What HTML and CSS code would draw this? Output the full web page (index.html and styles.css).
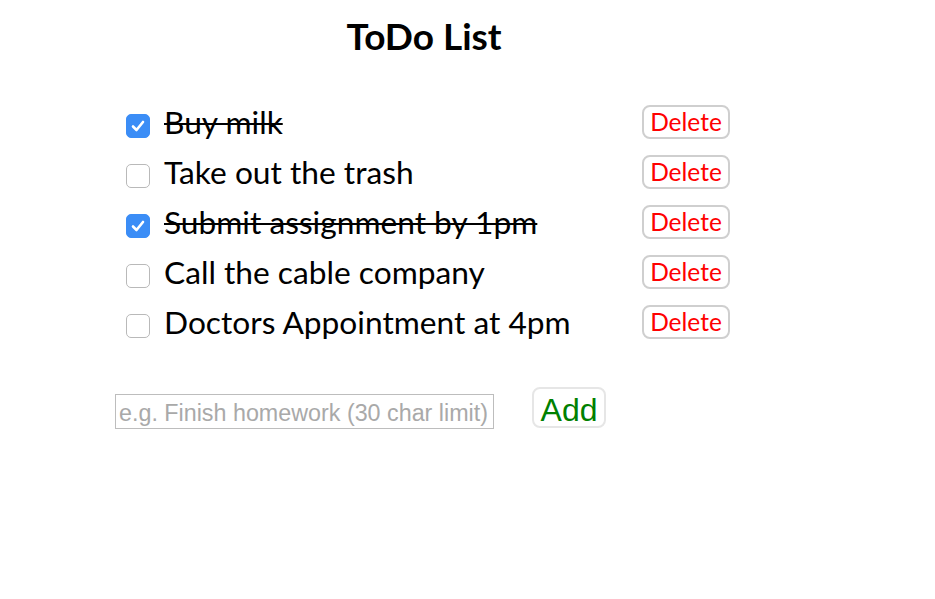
FILE: index.html
```html
<!DOCTYPE html>
<html>
<head>
<meta charset="utf-8">
<link rel="stylesheet" href="styles.css">
</head>
<body>
<div class="app">
  <h1 class="title">ToDo List</h1>
  <ul class="list">
    <li class="item">
      <label class="item-label"><input type="checkbox" class="check" checked><span class="text done">Buy milk</span></label>
      <button class="delete">Delete</button>
    </li>
    <li class="item">
      <label class="item-label"><input type="checkbox" class="check"><span class="text">Take out the trash</span></label>
      <button class="delete">Delete</button>
    </li>
    <li class="item">
      <label class="item-label"><input type="checkbox" class="check" checked><span class="text done">Submit assignment by 1pm</span></label>
      <button class="delete">Delete</button>
    </li>
    <li class="item">
      <label class="item-label"><input type="checkbox" class="check"><span class="text">Call the cable company</span></label>
      <button class="delete">Delete</button>
    </li>
    <li class="item">
      <label class="item-label"><input type="checkbox" class="check"><span class="text">Doctors Appointment at 4pm</span></label>
      <button class="delete">Delete</button>
    </li>
  </ul>
  <form class="add-form" onsubmit="return false">
    <input type="text" class="new-input" placeholder="e.g. Finish homework (30 char limit)" maxlength="30">
    <button class="add">Add</button>
  </form>
</div>
</body>
</html>
```
FILE: styles.css
```css
html, body {
  margin: 0;
  padding: 0;
  background: #fff;
}
body {
  font-family: "Lato", "Liberation Sans", sans-serif;
  color: #000;
}
.app {
  margin-left: 115px;
  width: 618px;
  padding-top: 14px;
}
.title {
  margin: 0;
  text-align: center;
  font-size: 37px;
  font-weight: 700;
  line-height: 44px;
}
.list {
  list-style: none;
  margin: 39px 0 0 0;
  padding: 0;
}
.item {
  display: flex;
  align-items: center;
  justify-content: space-between;
  height: 50px;
  padding-right: 3px;
}
.item-label {
  display: flex;
  align-items: center;
  padding-left: 11px;
}
.check {
  appearance: none;
  -webkit-appearance: none;
  margin: 8px 14px 0 0;
  width: 24px;
  height: 24px;
  border: 1px solid #b9b9b9;
  border-radius: 5px;
  background: #fff;
  box-sizing: border-box;
}
.check:checked {
  border-color: #3b8df6;
  background: #3b8df6 url("data:image/svg+xml;utf8,<svg xmlns='http://www.w3.org/2000/svg' viewBox='0 0 24 24'><path d='M7 12.5 L10.5 16 L17 8' fill='none' stroke='white' stroke-width='2.6' stroke-linecap='round' stroke-linejoin='round'/></svg>") center/24px 24px no-repeat;
}
.text {
  font-size: 31.7px;
  line-height: 36px;
}
.text.done {
  text-decoration: line-through;
  text-decoration-thickness: 2px;
}
.delete {
  font-family: "Lato", sans-serif;
  font-size: 24.5px;
  color: #ff0000;
  background: #fff;
  border: 2px solid #cfcfcf;
  border-radius: 8px;
  width: 88px;
  height: 34px;
  padding: 0;
  line-height: 28px;
}
.add-form {
  display: flex;
  align-items: flex-start;
  margin-top: 40px;
}
.new-input {
  margin-top: 7px;
  width: 379px;
  height: 35px;
  box-sizing: border-box;
  border: 1px solid #bdbdbd;
  padding: 4px 3px 0;
  font-family: "Liberation Sans", Arial, sans-serif;
  font-size: 23.3px;
  outline: none;
}
.new-input::placeholder {
  color: #a9a9a9;
}
.add {
  margin-left: 38px;
  width: 74px;
  height: 41px;
  box-sizing: border-box;
  border: 2px solid #e6e6e6;
  border-radius: 8px;
  background: #fff;
  color: #008000;
  font-family: "Liberation Sans", Arial, sans-serif;
  font-size: 32px;
  padding: 4px 0 0;
  line-height: 34px;
}
```
